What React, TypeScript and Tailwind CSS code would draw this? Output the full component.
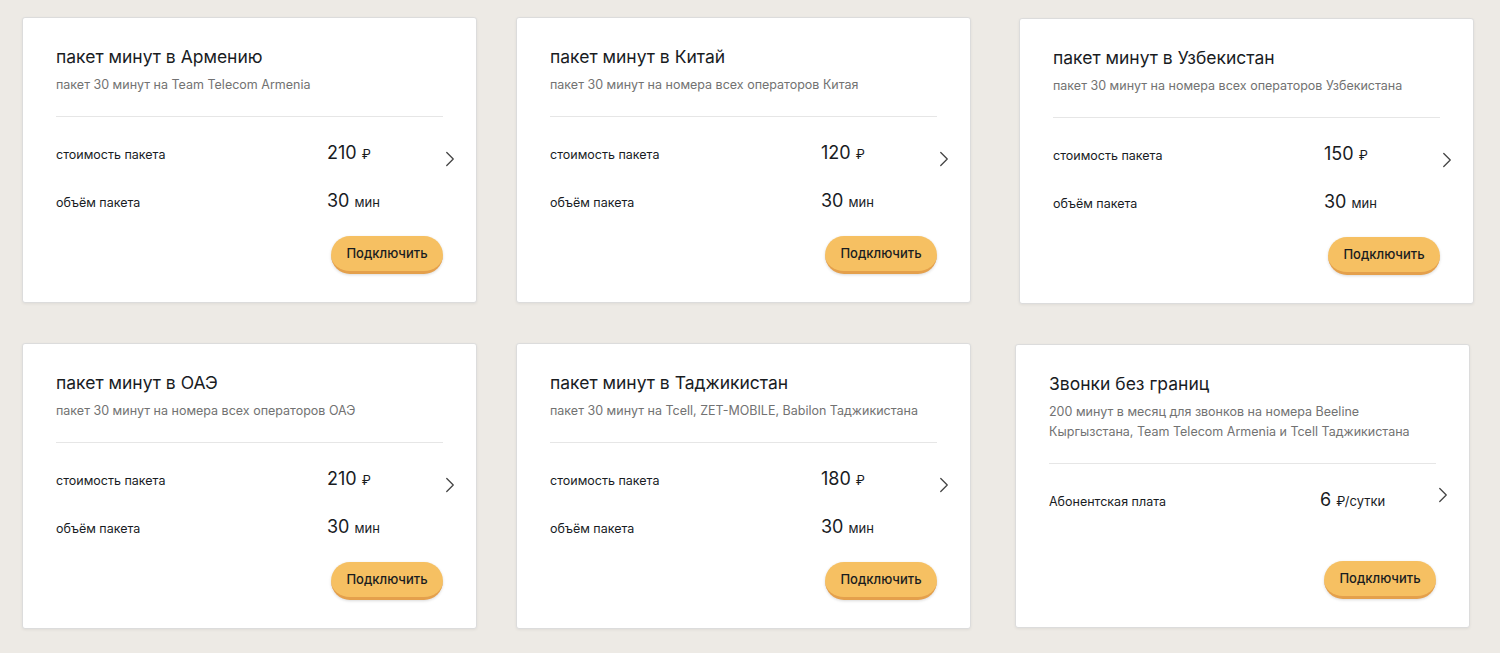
import { ChevronRight } from 'lucide-react'

type Row = { label: string; value: string; unit: string }

type Pack = {
  title: string
  desc: string[]
  rows: Row[]
  box: string
  arrowTop: string
}

const packs: Pack[] = [
  {
    title: 'пакет минут в Армению',
    desc: ['пакет 30 минут на Team Telecom Armenia'],
    rows: [
      { label: 'стоимость пакета', value: '210', unit: '₽' },
      { label: 'объём пакета', value: '30', unit: 'мин' },
    ],
    box: 'h-[286px]',
    arrowTop: 'top-[128px]',
  },
  {
    title: 'пакет минут в Китай',
    desc: ['пакет 30 минут на номера всех операторов Китая'],
    rows: [
      { label: 'стоимость пакета', value: '120', unit: '₽' },
      { label: 'объём пакета', value: '30', unit: 'мин' },
    ],
    box: 'h-[286px]',
    arrowTop: 'top-[128px]',
  },
  {
    title: 'пакет минут в Узбекистан',
    desc: ['пакет 30 минут на номера всех операторов Узбекистана'],
    rows: [
      { label: 'стоимость пакета', value: '150', unit: '₽' },
      { label: 'объём пакета', value: '30', unit: 'мин' },
    ],
    box: 'h-[286px] ml-[9px] mt-px',
    arrowTop: 'top-[128px]',
  },
  {
    title: 'пакет минут в ОАЭ',
    desc: ['пакет 30 минут на номера всех операторов ОАЭ'],
    rows: [
      { label: 'стоимость пакета', value: '210', unit: '₽' },
      { label: 'объём пакета', value: '30', unit: 'мин' },
    ],
    box: 'h-[286px]',
    arrowTop: 'top-[128px]',
  },
  {
    title: 'пакет минут в Таджикистан',
    desc: ['пакет 30 минут на Tcell, ZET-MOBILE, Babilon Таджикистана'],
    rows: [
      { label: 'стоимость пакета', value: '180', unit: '₽' },
      { label: 'объём пакета', value: '30', unit: 'мин' },
    ],
    box: 'h-[286px]',
    arrowTop: 'top-[128px]',
  },
  {
    title: 'Звонки без границ',
    desc: [
      '200 минут в месяц для звонков на номера Beeline',
      'Кыргызстана, Team Telecom Armenia и Tcell Таджикистана',
    ],
    rows: [{ label: 'Абонентская плата', value: '6', unit: '₽/сутки' }],
    box: 'h-[284px] ml-[5px] mt-px',
    arrowTop: 'top-[137px]',
  },
]

function Card({ pack }: { pack: Pack }) {
  return (
    <div
      className={`relative flex w-[455px] flex-col rounded-[3px] border border-[#dcdcdc] bg-white px-[33px] pt-[26px] pb-[28px] shadow-[0_1px_3px_rgba(0,0,0,0.06)] ${pack.box}`}
    >
      <h3 className="text-[17.5px] leading-[26px] text-[#191c1f]">{pack.title}</h3>
      <div className="mt-[5px] text-[12.5px] leading-[20px] text-[#727272]">
        {pack.desc.map(line => (
          <p key={line} className="whitespace-nowrap">
            {line}
          </p>
        ))}
      </div>
      <div className="mt-[21px] h-px bg-[#e6e6e6]" />
      <div className="mt-[22px] flex flex-col gap-[22px]">
        {pack.rows.map(row => (
          <div key={row.label} className="flex h-[26px] items-baseline">
            <span className="w-[271px] text-[12.5px] text-[#191c1f]">{row.label}</span>
            <span className="text-[#191c1f]">
              <span className="text-[18px]">{row.value}</span>
              <span className="ml-[5px] text-[13px]">{row.unit}</span>
            </span>
          </div>
        ))}
      </div>
      <ChevronRight
        className={`absolute right-[13px] h-[26px] w-[26px] text-[#444] ${pack.arrowTop}`}
        strokeWidth={1.2}
      />
      <div className="mt-auto flex justify-end">
        <button className="h-[38px] w-[112px] rounded-full border-b-[3px] border-[#e4a04c] bg-[#f6c062] text-[13px] font-medium text-[#191c1f] shadow-[0_1px_3px_rgba(0,0,0,0.15)]">
          Подключить
        </button>
      </div>
    </div>
  )
}

export default function App() {
  return (
    <div
      className="min-h-[653px] bg-[#edeae5] pl-[22px] pt-[17px]"
      style={{ fontFamily: 'Inter, "Noto Sans", sans-serif' }}
    >
      <div className="grid grid-cols-[455px_455px_455px] gap-x-[39px] gap-y-[39px]">
        {packs.map(p => (
          <Card key={p.title} pack={p} />
        ))}
      </div>
    </div>
  )
}
